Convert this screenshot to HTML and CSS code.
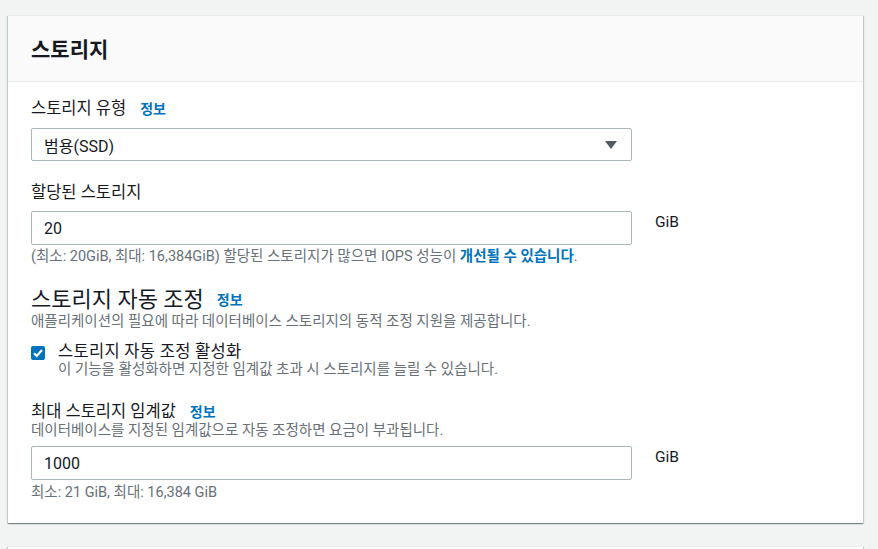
FILE: index.html
```html
<!DOCTYPE html>
<html lang="ko">
<head>
<meta charset="utf-8">
<link rel="stylesheet" href="styles.css">
</head>
<body>
<div class="page">
  <section class="card">
    <header class="card-header"><h2 class="card-title">스토리지</h2></header>
    <div class="card-body">
      <div class="field">
        <div class="label"><span>스토리지 유형</span><a class="info">정보</a></div>
        <div class="control-row">
          <div class="select">
            <span>범용(SSD)</span>
            <svg class="caret" width="12" height="8" viewBox="0 0 12 8"><polygon points="0,0 12,0 6,8" fill="#545b64"/></svg>
          </div>
        </div>
      </div>

      <div class="field f2">
        <div class="label"><span>할당된 스토리지</span></div>
        <div class="control-row">
          <div class="input">20</div>
          <span class="unit">GiB</span>
        </div>
        <div class="hint">(최소: 20GiB, 최대: 16,384GiB) 할당된 스토리지가 많으면 IOPS 성능이 <a class="hint-link">개선될 수 있습니다</a>.</div>
      </div>

      <div class="subsection">
        <div class="sub-title"><span>스토리지 자동 조정</span><a class="info">정보</a></div>
        <div class="desc">애플리케이션의 필요에 따라 데이터베이스 스토리지의 동적 조정 지원을 제공합니다.</div>
        <div class="check-row">
          <span class="checkbox"><svg width="14" height="14" viewBox="0 0 14 14"><polyline points="3,7.2 5.8,10 11,4" fill="none" stroke="#fff" stroke-width="2.2"/></svg></span>
          <div class="check-text">
            <div class="check-label">스토리지 자동 조정 활성화</div>
            <div class="desc">이 기능을 활성화하면 지정한 임계값 초과 시 스토리지를 늘릴 수 있습니다.</div>
          </div>
        </div>
      </div>

      <div class="field f3">
        <div class="label"><span>최대 스토리지 임계값</span><a class="info">정보</a></div>
        <div class="desc">데이터베이스를 지정된 임계값으로 자동 조정하면 요금이 부과됩니다.</div>
        <div class="control-row r3">
          <div class="input">1000</div>
          <span class="unit">GiB</span>
        </div>
        <div class="hint h3">최소: 21 GiB, 최대: 16,384 GiB</div>
      </div>
    </div>
  </section>
  <section class="card next"></section>
</div>
</body>
</html>
```
FILE: styles.css
```css
html, body {
  margin: 0;
  padding: 0;
  background: #f2f3f3;
  height: 549px;
  overflow: hidden;
}
body {
  font-family: Roboto, "Noto Sans CJK KR", sans-serif;
  color: #16191f;
  font-size: 16.5px;
}
.page {
  padding: 15px 15px 0 8px;
}
.card {
  width: 855px;
  background: #fff;
  box-shadow: 0 1px 1px 0 rgba(0, 28, 36, 0.3), 1px 1px 1px 0 rgba(0, 28, 36, 0.15), -1px 1px 1px 0 rgba(0, 28, 36, 0.15);
  border-top: 1px solid #eaeded;
}
.card.next {
  margin-top: 23px;
  height: 40px;
}
.card-header {
  height: 65px;
  background: #fafafa;
  border-bottom: 1px solid #eaeded;
  display: flex;
  align-items: center;
  padding: 0 23px;
}
.card-title {
  margin: 0;
  font-size: 21px;
  font-weight: 700;
  line-height: 26px;
  padding-top: 2px;
}
.card-body {
  padding: 17px 23px 21px 23px;
}
.label, .sub-title, .desc, .hint, .check-label {
  box-sizing: border-box;
}
.label {
  display: flex;
  align-items: center;
  height: 20px;
  line-height: 20px;
  font-size: 16.5px;
}
.info {
  color: #0073bb;
  font-weight: 700;
  font-size: 14px;
  line-height: 20px;
  margin-left: 14px;
}
.control-row {
  display: flex;
  align-items: flex-start;
  margin-top: 9px;
}
.select, .input {
  box-sizing: border-box;
  width: 601px;
  height: 34px;
  border: 1px solid #aab7b8;
  border-radius: 2px;
  display: flex;
  align-items: center;
  justify-content: space-between;
  padding: 1px 14px 0 12px;
  font-size: 16px;
}
.select {
  height: 33px;
}
.caret {
  display: block;
}
.unit {
  margin-left: 23px;
  line-height: 20px;
  font-size: 15.5px;
  padding-top: 1px;
}
.f2 {
  margin-top: 22px;
}
.f2 .control-row {
  margin-top: 8px;
}
.hint {
  font-size: 14.5px;
  line-height: 18px;
  height: 18px;
  color: #687078;
  margin-top: 3px;
}
.hint-link {
  color: #0073bb;
  font-weight: 700;
}
.subsection {
  margin-top: 20px;
}
.sub-title {
  display: flex;
  align-items: center;
  font-size: 22px;
  line-height: 25px;
  height: 26px;
  padding-top: 1px;
}
.sub-title .info {
  margin-left: 13px;
}
.desc {
  font-size: 14.5px;
  line-height: 17px;
  height: 18px;
  color: #687078;
  padding-top: 1px;
}
.check-row {
  display: flex;
  align-items: flex-start;
  margin-top: 12px;
}
.checkbox {
  width: 14px;
  height: 14px;
  background: #0073bb;
  border-radius: 2px;
  margin-top: 4px;
  flex: none;
}
.checkbox svg {
  display: block;
}
.check-text {
  margin-left: 13px;
}
.check-label {
  font-size: 16.5px;
  letter-spacing: 0.3px;
  line-height: 17px;
  height: 18px;
  padding-top: 1px;
}
.f3 {
  margin-top: 23px;
}
.f3 .label {
  padding-top: 1px;
  line-height: 19px;
}
.r3 {
  margin-top: 7px;
}
.h3 {
  margin-top: 4px;
}
```
